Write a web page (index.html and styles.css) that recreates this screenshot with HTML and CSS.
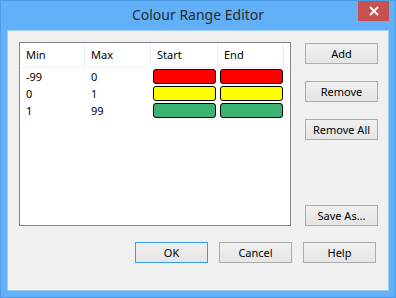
FILE: index.html
```html
<!DOCTYPE html>
<html>
<head>
  <meta charset="utf-8">
  <title>Colour Range Editor</title>
  <link rel="stylesheet" href="styles.css">
</head>
<body>
  <div class="window">
    <div class="titlebar">
      <div></div>
      <div class="title">Colour Range Editor</div>
      <div class="close">
        <svg width="10" height="10" viewBox="0 0 10 10">
          <path d="M1 1 L9 9 M9 1 L1 9" stroke="#fff" stroke-width="2"/>
        </svg>
      </div>
    </div>

    <div class="client">
      <div class="main">
        <div class="list">
          <div class="row head">
            <div class="cell">Min</div>
            <div class="cell">Max</div>
            <div class="cell">Start</div>
            <div class="cell">End</div>
          </div>
          <div class="row">
            <div class="cell">-99</div>
            <div class="cell">0</div>
            <div class="cell"><span class="swatch red"></span></div>
            <div class="cell"><span class="swatch red"></span></div>
          </div>
          <div class="row">
            <div class="cell">0</div>
            <div class="cell">1</div>
            <div class="cell"><span class="swatch yellow"></span></div>
            <div class="cell"><span class="swatch yellow"></span></div>
          </div>
          <div class="row">
            <div class="cell">1</div>
            <div class="cell">99</div>
            <div class="cell"><span class="swatch green"></span></div>
            <div class="cell"><span class="swatch green"></span></div>
          </div>
        </div>

        <div class="side">
          <button class="btn">Add</button>
          <button class="btn">Remove</button>
          <button class="btn">Remove All</button>
          <button class="btn save">Save As...</button>
        </div>
      </div>

      <div class="footer">
        <button class="btn btn-default">OK</button>
        <button class="btn">Cancel</button>
        <button class="btn">Help</button>
      </div>
    </div>
  </div>
</body>
</html>
```

FILE: styles.css
```css
body {
  margin: 0;
  font-family: "Noto Sans", "Open Sans", sans-serif;
  font-size: 11px;
  color: #000;
}
.window {
  width: 396px;
  height: 298px;
  box-sizing: border-box;
  background-color: #62b0f7;
  border: 1px solid #4e9ce6;
  display: flex;
  flex-direction: column;
}
.titlebar {
  height: 29px;
  display: grid;
  grid-template-columns: 1fr auto 1fr;
  align-items: start;
}
.title {
  font-size: 14px;
  color: #2b2b2b;
  padding-top: 4px;
  white-space: nowrap;
}
.close {
  justify-self: end;
  margin-right: 6px;
  width: 31px;
  height: 20px;
  background-color: #c75050;
  display: flex;
  align-items: center;
  justify-content: center;
}
.client {
  flex: 1;
  margin: 0 6px 6px;
  border: 1px solid #9ccbf5;
  background-color: #f0f0f0;
  display: flex;
  flex-direction: column;
}
.main {
  display: flex;
  padding: 11px 10px 0 11px;
  gap: 14px;
}
.list {
  width: 270px;
  height: 182px;
  border: 1px solid #828790;
  background-color: #fff;
}
.row {
  display: grid;
  grid-template-columns: 65px 66px 67px 66px;
  height: 17px;
  align-items: center;
}
.row.head {
  height: 24px;
  border-bottom: 1px solid #f0f4f9;
}
.head .cell {
  height: 24px;
  line-height: 24px;
  border-right: 1px solid #e5eef8;
}
.cell {
  padding-left: 6px;
  white-space: nowrap;
}
.row:not(.head) .cell:nth-child(n+3) {
  padding-left: 2px;
}
.swatch {
  display: block;
  width: 61px;
  height: 13px;
  border: 1px solid #000;
  border-radius: 3px;
}
.red { background-color: #ff0000; }
.yellow { background-color: #ffff00; }
.green { background-color: #3cb371; }
.side {
  display: flex;
  flex-direction: column;
  padding-top: 1px;
}
.btn {
  width: 73px;
  height: 21px;
  padding: 0;
  border: 1px solid #acacac;
  background: linear-gradient(#f0f0f0, #e5e5e5);
  font-family: inherit;
  font-size: 11px;
  color: #000;
}
.side .btn + .btn {
  margin-top: 17px;
}
.side .btn.save {
  margin-top: auto;
}
.footer {
  display: flex;
  justify-content: flex-end;
  gap: 11px;
  padding: 16px 12px 0 0;
}
.btn-default {
  border-color: #3399ff;
}
```
